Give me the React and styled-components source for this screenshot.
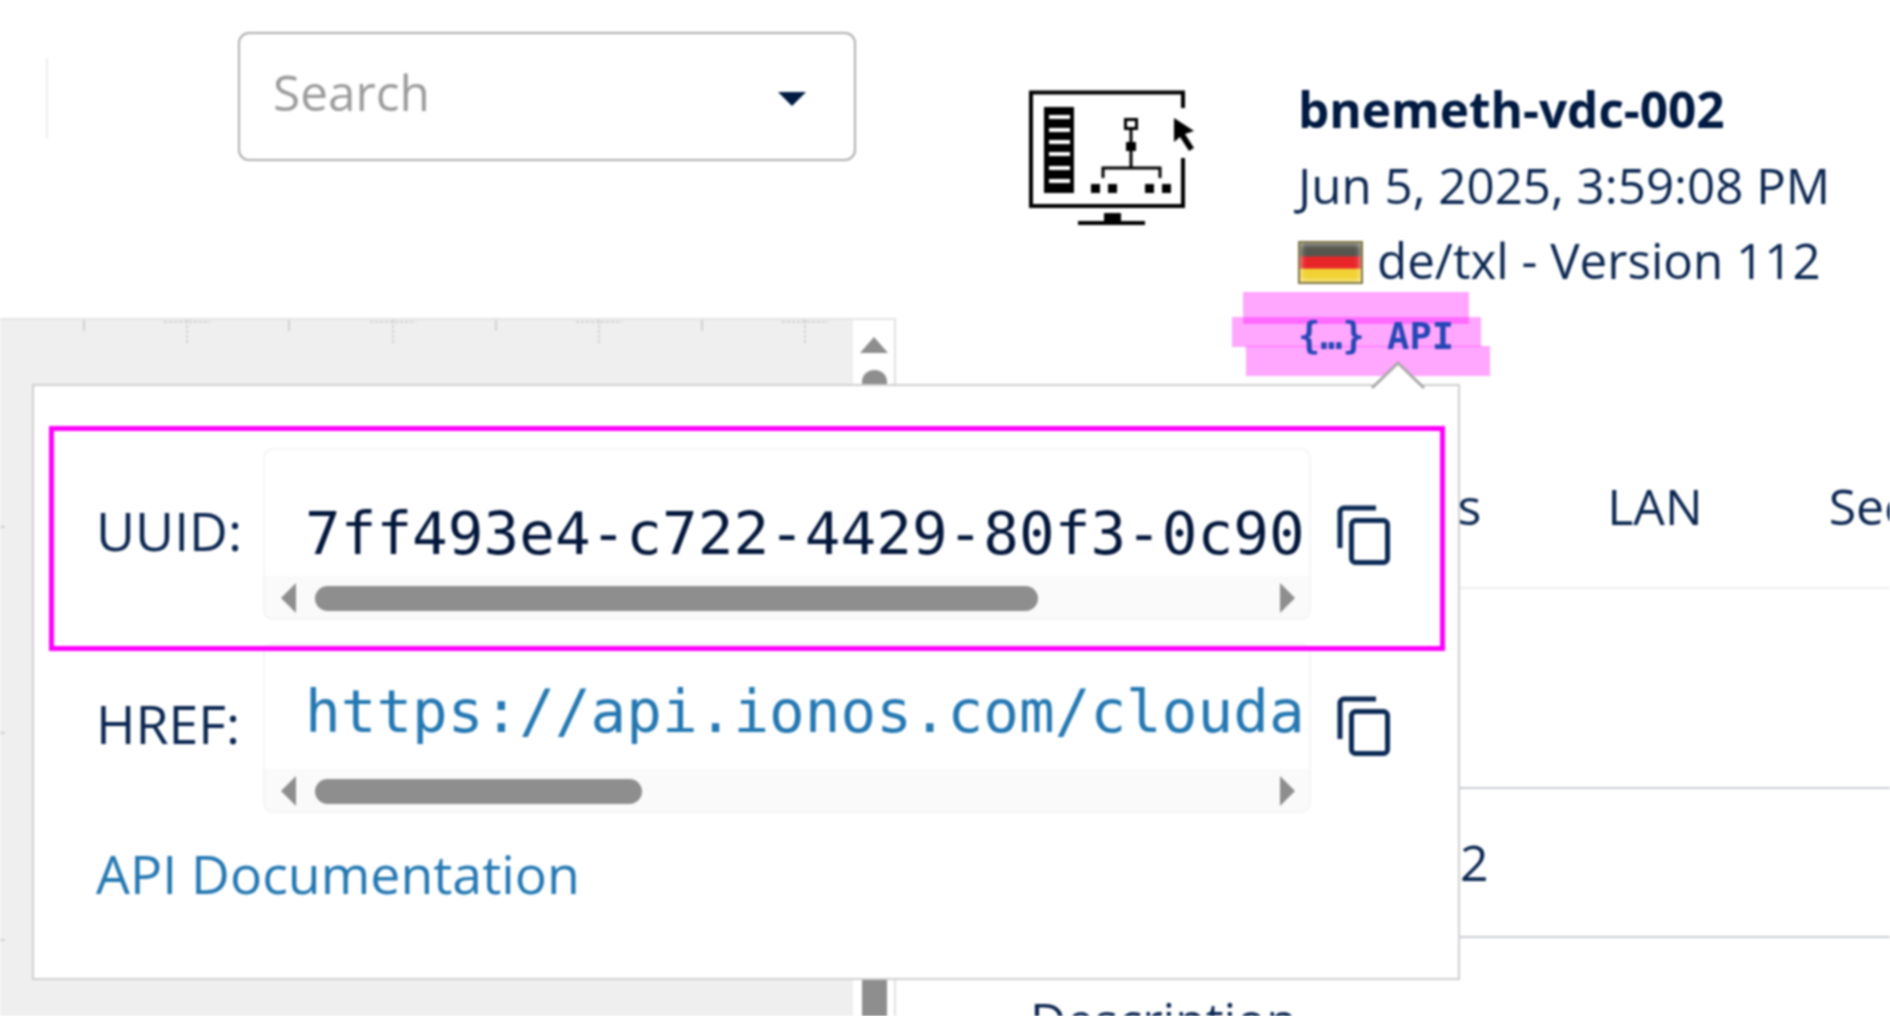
import React from "react";
import styled, { createGlobalStyle } from "styled-components";

const Global = createGlobalStyle`
  html, body { margin: 0; padding: 0; background: #fff; }
  body { font-family: "Open Sans", "Noto Sans", sans-serif; color: #0b2a55; }
`;
const Page = styled.div`
  position: relative; width: 1890px; height: 1016px; overflow: hidden;
  display: flex; flex-direction: column; background: #fff; filter: blur(1px);
`;
const Header = styled.header`
  height: 318px; flex: none; display: flex; align-items: flex-start;
`;
const Divider = styled.div`
  width: 2px; height: 80px; margin: 58px 190px 0 46px; background: #eee;
`;
const SearchBox = styled.div`
  height: 125px; margin-top: 32px; box-sizing: content-box;
  border: 2px solid #aeaeae; border-radius: 11px; display: flex; align-items: center;
  justify-content: space-between; padding: 0 48px 0 33px; width: 533px;
`;
const SearchText = styled.span`
  font-size: 49.5px; line-height: 60px; color: #9c9c9c; margin-top: -10px;
`;
const Caret = styled.span`
  width: 0; height: 0; border-left: 14px solid transparent; border-right: 14px solid transparent;
  border-top: 14px solid #001b41; margin-top: 4px;
`;
const Identity = styled.div`
  display: flex; margin-left: 169px; padding-top: 88px;
`;
const Info = styled.div`
  display: flex; flex-direction: column; margin-left: 103px; margin-top: -16px;
`;
const Title = styled.div`
  font-size: 49.5px; line-height: 75px; font-weight: 700; color: #001a42; white-space: nowrap;
`;
const Line = styled.div`
  font-size: 49.3px; line-height: 75px; color: #0a2650; white-space: nowrap;
  display: flex; align-items: center;
`;
const Flag = styled.span`
  width: 61px; height: 39px; margin: 6px 14px 0 0; border: 2px solid #7d7440;
  background: linear-gradient(#55554e 0 33%, #e8262a 36% 64%, #f2d233 68% 100%);
  box-shadow: inset 0 0 6px rgba(255, 255, 255, 0.8);
`;
const ApiLink = styled.a`
  position: relative; align-self: flex-start; margin: 2px 0 0 0;
  font: 700 37px/75px "DejaVu Sans Mono", "Liberation Mono", monospace;
  color: #2446b4; white-space: nowrap;
`;
const Mark = styled.i`
  position: absolute; background: rgba(255, 0, 255, 0.35); z-index: -1;
  left: ${p => p.$x}px; top: ${p => p.$y}px; width: ${p => p.$w}px; height: ${p => p.$h}px;
`;
const Body = styled.main`
  flex: 1; display: flex; min-height: 0;
`;
const Canvas = styled.section`
  position: relative; width: 853px; flex: none; background: #efefef; border-top: 2px solid #e4e4e4;
  box-sizing: border-box;
`;
const Ruler = styled.svg`
  position: absolute; left: 0; top: 0; width: 853px; height: 698px;
`;
const VScroll = styled.div`
  width: 43px; flex: none; box-sizing: border-box; border-top: 2px solid #e4e4e4;
  border-right: 2px solid #e0e0e0; padding: 17px 0 0 7px; display: flex; flex-direction: column;
`;
const UpArrow = styled.span`
  width: 0; height: 0; border-left: 14px solid transparent; border-right: 14px solid transparent;
  border-bottom: 16px solid #8e8e8e;
`;
const VThumb = styled.span`
  width: 25px; flex: 1; margin: 17px 0 0 2px; background: #8e8e8e; border-radius: 12px 12px 0 0;
`;
const Details = styled.section`
  flex: 1; min-width: 0; overflow: hidden;
`;
const Tabs = styled.nav`
  height: 271px; box-sizing: border-box; border-bottom: 2px solid #eee; display: flex; gap: 126px;
  padding: 156px 0 0 412px; font-size: 50px; line-height: 65px; color: #0a2650; white-space: nowrap;
`;
const Row = styled.div`
  height: ${p => p.$h}px; box-sizing: border-box; border-bottom: 2px solid #c9cbd0;
  padding: ${p => p.$top}px 0 0 ${p => p.$left}px; font-size: 50px; line-height: 65px; color: #0a2650;
`;
const Popover = styled.div`
  position: absolute; left: 32px; top: 384px; width: 1428px; height: 596px; box-sizing: border-box;
  background: #fff; border: 2px solid #cfcfcf; padding: 62px 0 0 62px;
`;
const Tip = styled.svg`
  position: absolute; left: 1336px; top: -26px; width: 56px; height: 30px;
`;
const CodeRow = styled.div`
  display: grid; grid-template-columns: 167px 1048px 53px; column-gap: 0; height: ${p => p.$h}px;
  margin-bottom: ${p => p.$gap}px;
`;
const Label = styled.div`
  font-size: 53.6px; line-height: 60px; color: #0a2650; padding-top: ${p => p.$top}px;
`;
const CodeBox = styled.div`
  width: 1048px; box-sizing: border-box; border: 2px solid #f4f4f4; border-radius: 10px;
  background: #fff; overflow: hidden; display: flex; flex-direction: column;
`;
const CodeText = styled.div`
  flex: 1; min-height: 0; overflow: hidden; white-space: nowrap; margin-right: 6px; padding: ${p => p.$top}px 0 0 40px;
  font: 59.3px/70px "DejaVu Sans Mono", "Liberation Mono", monospace; color: ${p => p.$color};
`;
const Track = styled.div`
  height: 42px; box-sizing: border-box; flex: none; background: #fafafa; display: flex; align-items: center; padding: 2px 14px 0 16px;
`;
const ArrowL = styled.span`
  width: 0; height: 0; border-top: 15px solid transparent; border-bottom: 15px solid transparent;
  border-right: 15px solid #8e8e8e;
`;
const ArrowR = styled(ArrowL)`
  border-right: none; border-left: 15px solid #8e8e8e; margin-left: auto;
`;
const Thumb = styled.span`
  height: 25px; margin-left: 19px; border-radius: 13px; background: #8e8e8e;
`;
const CopyIcon = styled.svg`
  width: 53px; height: 60px; margin: ${p => p.$top}px 0 0 26px; display: block;
`;
const DocLink = styled.a`
  font-size: 53.6px; line-height: 60px; color: #2478b2; display: block; white-space: nowrap;
`;
const Annotation = styled.div`
  position: absolute; left: 15px; top: 40px; width: 1396px; height: 225px; box-sizing: border-box;
  border: 5px solid #ff00ff;
`;

const Copy = ({ top }) => (
  <CopyIcon $top={top} viewBox="0 0 53 60" fill="none" stroke="#0b2a55" strokeWidth="5">
    <path d="M3 43V7a4 4 0 0 1 4-4h32" />
    <rect x="14.5" y="15.5" width="36" height="42" rx="4" />
  </CopyIcon>
);

const DatacenterIcon = () => (
  <svg width="170" height="140" viewBox="0 0 170 140" style={{ display: "block", flex: "none" }}>
    <g fill="none" stroke="#000" strokeWidth="4">
      <path d="M158 20V4.5H6V118h152V70" />
      <rect x="100.5" y="31.5" width="11" height="9" strokeWidth="3" />
      <path d="M106 41v13M106 63v17M78 90V80h57v10" strokeWidth="3" />
    </g>
    <rect x="19" y="19" width="30" height="86" fill="#000" />
    {[29, 42, 54, 66, 80, 93].map(y => <rect key={y} x="24" y={y - 2} width="21" height="4" fill="#fff" />)}
    <rect x="101" y="54" width="10" height="9" />
    {[66, 83, 120, 137].map(x => <rect key={x} x={x} y="96" width="9" height="9" />)}
    <rect x="79" y="125" width="17" height="9" />
    <rect x="53" y="133" width="67" height="4" />
    <path d="M149 30l20 13-9 3 9 14-5 3-9-14-6 5z" />
  </svg>
);

const Ticks = () => (
  <Ruler viewBox="0 0 853 698" fill="none" stroke="#d2d2d2">
    {[84, 289, 496, 702].map(x => <path key={x} d={`M${x} 0v11`} strokeWidth="2" />)}
    {[187, 393, 599, 805].map(x => <path key={x} d={`M${x} 0v23M${x - 23} 2h46`} strokeWidth="2" strokeDasharray="3 2" />)}
    {[207, 413, 620].map(y => <path key={y} d={`M0 ${y}h5`} strokeWidth="2" />)}
  </Ruler>
);

export default function App() {
  return (
    <>
      <Global />
      <Page>
        <Header>
          <Divider />
          <SearchBox>
            <SearchText>Search</SearchText>
            <Caret />
          </SearchBox>
          <Identity>
            <DatacenterIcon />
            <Info>
              <Title>bnemeth-vdc-002</Title>
              <Line>Jun 5, 2025, 3:59:08 PM</Line>
              <Line><Flag />de/txl - Version 112</Line>
              <ApiLink>
                <Mark $x={-55} $y={-7} $w={226} $h={32} />
                <Mark $x={-66} $y={18} $w={249} $h={30} />
                <Mark $x={-52} $y={47} $w={244} $h={30} />
                {"{…} API"}
              </ApiLink>
            </Info>
          </Identity>
        </Header>
        <Body>
          <Canvas><Ticks /></Canvas>
          <VScroll><UpArrow /><VThumb /></VScroll>
          <Details>
            <Tabs>
              <span>Servers</span>
              <span>LAN</span>
              <span>Security</span>
            </Tabs>
            <Row $h={200} />
            <Row $h={149} $top={41} $left={564}>2</Row>
            <Row $h={80} $top={50} $left={134}>Description</Row>
          </Details>
        </Body>
        <Popover>
          <Tip viewBox="0 0 56 30" fill="#fff" stroke="#a8a8a8" strokeWidth="3">
            <path d="M2 28L28 3l26 25" />
          </Tip>
          <CodeRow $h={172} $gap={23}>
            <Label $top={53}>UUID:</Label>
            <CodeBox>
              <CodeText $top={49} $color="#04183c">7ff493e4-c722-4429-80f3-0c90a</CodeText>
              <Track><ArrowL /><Thumb style={{ width: 723 }} /><ArrowR /></Track>
            </CodeBox>
            <Copy top={57} />
          </CodeRow>
          <CodeRow $h={170} $gap={31}>
            <Label $top={51}>HREF:</Label>
            <CodeBox>
              <CodeText $top={32} $color="#2478b2">https://api.ionos.com/cloudapi/v6</CodeText>
              <Track><ArrowL /><Thumb style={{ width: 327 }} /><ArrowR /></Track>
            </CodeBox>
            <Copy top={53} />
          </CodeRow>
          <DocLink>API Documentation</DocLink>
          <Annotation />
        </Popover>
      </Page>
    </>
  );
}
